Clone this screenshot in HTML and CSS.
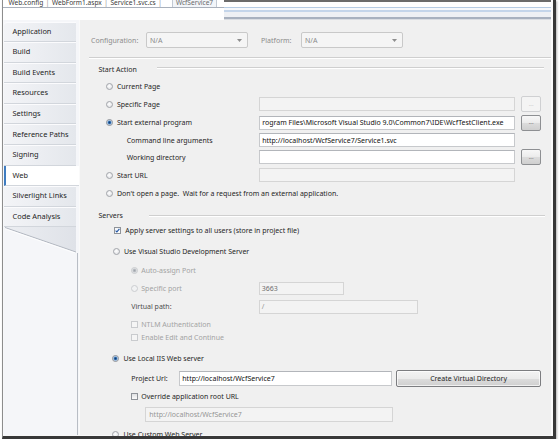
FILE: index.html
```html
<!DOCTYPE html>
<html lang="en">
<head>
<meta charset="utf-8">
<title>WcfService7 - Web</title>
<link rel="stylesheet" href="styles.css">
</head>
<body>
<div class="window">
  <div class="frame">
    <header class="doc-tabs">
      <div class="doc-tabs-left">
        <div class="tab-row">
          <span class="tab">Web.config</span><span class="tab-sep">|</span>
          <span class="tab">WebForm1.aspx</span><span class="tab-sep">|</span>
          <span class="tab">Service1.svc.cs</span><span class="tab-sep">|</span>
          <span class="tab tab-active">WcfService7</span>
        </div>
        <div class="tab-underline"></div>
      </div>
      <div class="doc-tabs-right">
        <div class="band band-top"></div>
        <div class="band band-gap"></div>
        <div class="band band-blue"></div>
        <div class="band band-gap2"></div>
        <div class="band band-blue2"></div>
        <div class="band band-mist"></div>
        <div class="band band-steel"></div>
        <div class="band band-base"></div>
      </div>
    </header>

    <div class="designer">
      <nav class="pages">
        <div class="page first">Application</div>
        <div class="page">Build</div>
        <div class="page">Build Events</div>
        <div class="page">Resources</div>
        <div class="page">Settings</div>
        <div class="page">Reference Paths</div>
        <div class="page">Signing</div>
        <div class="page active">Web</div>
        <div class="page">Silverlight Links</div>
        <div class="page">Code Analysis</div>
        <svg class="pages-tail" width="74" height="26" viewBox="0 0 74 26">
          <defs>
            <linearGradient id="tailFill" x1="0" y1="0" x2="1" y2="0">
              <stop offset="0" stop-color="#eceef2"/>
              <stop offset="1" stop-color="#dfe2e8"/>
            </linearGradient>
          </defs>
          <polygon points="0,0 72,0 72,25" fill="url(#tailFill)"/>
          <line x1="1" y1="0.5" x2="72" y2="25" stroke="#b3b8c1" stroke-width="1"/>
          <line x1="1" y1="1.8" x2="71" y2="26" stroke="#ffffff" stroke-width="0.8"/>
        </svg>
        <div class="pages-fill"></div>
      </nav>

      <main class="pane">
        <div class="config-row">
          <span class="cfg-label cfg-conf">Configuration:</span>
          <span class="select"><span class="select-text">N/A</span><svg class="select-arrow" width="5" height="3" viewBox="0 0 5 3"><polygon points="0,0 5,0 2.5,3" fill="#8e8e8e"/></svg></span>
          <span class="cfg-label cfg-plat">Platform:</span>
          <span class="select"><span class="select-text">N/A</span><svg class="select-arrow" width="5" height="3" viewBox="0 0 5 3"><polygon points="0,0 5,0 2.5,3" fill="#8e8e8e"/></svg></span>
        </div>
        <div class="etched top-rule"></div>

        <div class="group-head start-head">
          <span class="group-title start-title">Start Action</span>
          <span class="etched group-rule start-rule"></span>
        </div>

        <div class="start-rows">
          <div class="row r1">
            <span class="choice"><span class="radio"></span><span class="label">Current Page</span></span>
          </div>
          <div class="row r2">
            <span class="choice"><span class="radio"></span><span class="label">Specific Page</span></span>
            <span class="field off wide"></span>
            <span class="browse off">...</span>
          </div>
          <div class="row r3">
            <span class="choice"><span class="radio on"></span><span class="label">Start external program</span></span>
            <span class="field wide"><span class="field-text">rogram Files\Microsoft Visual Studio 9.0\Common7\IDE\WcfTestClient.exe</span></span>
            <span class="browse">...</span>
          </div>
          <div class="row r4">
            <span class="choice sub"><span class="label">Command line arguments</span></span>
            <span class="field wide"><span class="field-text">http://localhost/WcfService7/Service1.svc</span></span>
          </div>
          <div class="row r5">
            <span class="choice sub"><span class="label">Working directory</span></span>
            <span class="field wide"></span>
            <span class="browse">...</span>
          </div>
          <div class="row r6">
            <span class="choice"><span class="radio"></span><span class="label">Start URL</span></span>
            <span class="field off wide"></span>
          </div>
          <div class="row r7">
            <span class="choice"><span class="radio"></span><span class="label">Don't open a page.&nbsp; Wait for a request from an external application.</span></span>
          </div>
        </div>

        <div class="group-head servers-head">
          <span class="group-title servers-title">Servers</span>
          <span class="etched group-rule servers-rule"></span>
        </div>

        <div class="server-rows">
          <div class="row s-apply">
            <span class="check on"><svg width="5" height="5" viewBox="0 0 5 5"><path d="M0.6 2.6 L1.9 3.9 L4.4 0.9" fill="none" stroke="#2156a5" stroke-width="1.1"/></svg></span>
            <span class="label">Apply server settings to all users (store in project file)</span>
          </div>
          <div class="row s-vs">
            <span class="radio"></span><span class="label">Use Visual Studio Development Server</span>
          </div>
          <div class="row s-auto">
            <span class="radio dim-on"></span><span class="label dim">Auto-assign Port</span>
          </div>
          <div class="row s-port">
            <span class="port-choice"><span class="radio dim-off"></span><span class="label dim">Specific port</span></span>
            <span class="field off port-field"><span class="field-text grey">3663</span></span>
          </div>
          <div class="row s-vpath">
            <span class="label vpath-label">Virtual path:</span>
            <span class="field off vpath-field"><span class="field-text light">/</span></span>
          </div>
          <div class="row s-ntlm">
            <span class="check dim-box"></span><span class="label dim">NTLM Authentication</span>
          </div>
          <div class="row s-edit">
            <span class="check dim-box"></span><span class="label dim">Enable Edit and Continue</span>
          </div>
          <div class="row s-iis">
            <span class="radio on"></span><span class="label">Use Local IIS Web server</span>
          </div>
          <div class="row s-url">
            <span class="label url-label">Project Url:</span>
            <span class="field url-field"><span class="field-text">http://localhost/WcfService7</span></span>
            <span class="push-button">Create Virtual Directory</span>
          </div>
          <div class="row s-override">
            <span class="check"></span><span class="label">Override application root URL</span>
          </div>
          <div class="row s-root">
            <span class="field off root-field"><span class="field-text light">http://localhost/WcfService7</span></span>
          </div>
          <div class="row s-custom">
            <span class="radio"></span><span class="label">Use Custom Web Server</span>
          </div>
        </div>
      </main>
    </div>
  </div>
</div>
</body>
</html>
```

FILE: styles.css
```css
* { box-sizing: border-box; }

html, body {
  margin: 0;
  background: #ffffff;
}

body {
  font-family: "Noto Sans", "Open Sans", "DejaVu Sans", sans-serif;
  font-size: 7px;
  line-height: 1;
  color: #1f1f1f;
}

/* window chrome */
.window {
  margin-left: 2px;
  width: 554px;
  height: 439px;
  border-left: 1px solid #8d8d8d;
  border-right: 3px solid #383838;
  border-bottom: 3px solid #383838;
  box-shadow: 1px 1px 2px rgba(0, 0, 0, 0.3);
  overflow: hidden;
}

.frame {
  height: 100%;
  display: flex;
  flex-direction: column;
  border-right: 2px solid #fbfbfb;
  border-bottom: 1px solid #f7f7f7;
  background: #f7f8fa;
}

/* document tab strip */
.doc-tabs {
  height: 20px;
  flex-shrink: 0;
  display: flex;
  background: #ffffff;
}

.doc-tabs-left {
  width: 221px;
  display: flex;
  flex-direction: column;
}

.tab-row {
  height: 7px;
  overflow: hidden;
  display: flex;
  align-items: flex-start;
  padding-left: 4px;
  white-space: nowrap;
  color: #3a3a3a;
  font-size: 6.6px;
}

.tab, .tab-sep {
  margin-top: -1.5px;
  line-height: 8px;
}

.tab { padding: 0 1.5px; }
.tab-sep { color: #8a8a8a; padding: 0 1px; }

.tab-active {
  margin-left: 9px;
  padding: 0 3px;
  color: #6a6a6a;
  background: #f2f5f9;
  border-left: 1px solid #c3cad4;
  border-right: 1px solid #c3cad4;
}

.tab-underline {
  height: 1px;
  background: #a9b0bb;
}

.doc-tabs-right {
  flex: 1;
  display: flex;
  flex-direction: column;
}

.band { flex-shrink: 0; }
.band-top { height: 2px; background: #6b6b6b; }
.band-gap { height: 5px; background: #ffffff; }
.band-blue { height: 1px; background: #b6cce4; }
.band-gap2 { height: 2px; background: #f7f9fc; }
.band-blue2 { height: 2px; background: #c4d5ea; }
.band-mist { height: 5px; background: #eef0f4; }
.band-steel { height: 2px; background: #a8b1bf; }
.band-base { height: 1px; background: #dadde2; }

/* page list on the left */
.designer {
  flex: 1;
  display: flex;
  min-height: 0;
}

.pages {
  width: 75px;
  margin-left: 1px;
  padding-top: 1.5px;
  display: flex;
  flex-direction: column;
  background: #f5f6f9;
}

.page {
  height: 20.6px;
  flex-shrink: 0;
  display: flex;
  align-items: center;
  padding-left: 8.5px;
  margin-right: 3px;
  font-size: 7.4px;
  white-space: nowrap;
  background: linear-gradient(to right, #f3f4f7, #e4e7ec);
  border-bottom: 1px solid #d2d6dc;
  box-shadow: inset 0 1px 0 #fbfbfd;
  color: #1e1e1e;
}

.page.first {
  border-top-left-radius: 3px;
}

.page.active {
  margin-right: 0;
  background: #ffffff;
  border-left: 2px solid #3f7cc0;
  padding-left: 6.5px;
  box-shadow: none;
}

.pages-tail {
  display: block;
  flex-shrink: 0;
}

.pages-fill {
  flex: 1;
  margin-right: 1px;
  border-right: 1px solid #b8bdc5;
}

/* property pane */
.pane {
  flex: 1;
  display: flex;
  flex-direction: column;
  background: #f0f0f0;
  border-left: 1px solid #fafafa;
  padding-top: 12px;
}

.config-row {
  height: 16px;
  flex-shrink: 0;
  display: flex;
  align-items: center;
}

.cfg-label { color: #8c8c8c; }
.cfg-conf { margin-left: 11px; width: 55px; }
.cfg-plat { margin-left: 13px; width: 40px; }

.select {
  width: 102px;
  height: 16px;
  display: flex;
  align-items: center;
  justify-content: space-between;
  padding: 0 5px 0 3px;
  border: 1px solid #c9c9c9;
  border-radius: 2px;
  background: #f5f5f5;
}

.select-text { color: #8a8a8a; }
.select-arrow { display: block; }

.etched {
  height: 2px;
  border-top: 1px solid #cfcfcf;
  border-bottom: 1px solid #ffffff;
}

.top-rule {
  flex-shrink: 0;
  margin-top: 8.5px;
  margin-left: 9px;
}

.group-head {
  height: 12px;
  flex-shrink: 0;
  display: flex;
  align-items: center;
}

.group-title {
  margin-left: 18.5px;
  color: #262626;
}

.group-rule {
  align-self: flex-start;
}

.start-head { margin-top: 4.5px; }
.start-title { width: 58px; }
.start-rule { width: 387px; margin-top: 3.5px; }

.servers-head { margin-top: 10.7px; }
.servers-title { width: 50px; }
.servers-rule { width: 396px; margin-top: 5px; }

/* rows */
.row {
  height: 12px;
  flex-shrink: 0;
  display: flex;
  align-items: center;
  white-space: nowrap;
}

.label { color: #1f1f1f; }
.label.dim { color: #a3a3a3; }

.start-rows {
  display: flex;
  flex-direction: column;
  margin-left: 25.7px;
}

.start-rows .r1 { margin-top: 5.7px; }
.start-rows .r2 { margin-top: 5.6px; }
.start-rows .r3 { margin-top: 6.4px; }
.start-rows .r4 { margin-top: 5.6px; }
.start-rows .r5 { margin-top: 5px; }
.start-rows .r6 { margin-top: 6px; }
.start-rows .r7 { margin-top: 6px; }

.choice {
  width: 153.5px;
  flex-shrink: 0;
  display: flex;
  align-items: center;
}

.choice .radio { margin-right: 4.2px; }
.choice.sub { padding-left: 21px; }
.r7 .choice { width: auto; }

.radio {
  width: 7px;
  height: 7px;
  flex-shrink: 0;
  border-radius: 50%;
  border: 1px solid #a2a5aa;
  background: radial-gradient(circle at 45% 40%, #ffffff 0, #e4e5e8 3px);
}

.radio.on {
  border-color: #8d9197;
  background: radial-gradient(circle, #153c68 0, #2b67ab 1.2px, #a8c7e8 2.1px, #eef0f3 2.6px);
}

.radio.dim-on {
  border-color: #cacccf;
  background: radial-gradient(circle, #9ea3a9 0, #b8bcc1 1.3px, #e8e9eb 2.4px);
}

.radio.dim-off {
  border-color: #cbcdd0;
  background: #f1f2f3;
}

.check {
  width: 7px;
  height: 7px;
  flex-shrink: 0;
  display: flex;
  align-items: center;
  justify-content: center;
  border: 1px solid #8f9399;
  background: linear-gradient(#e0e1e3, #fbfbfb);
}

.check svg { display: block; }

.check.on { background: linear-gradient(#f2f4f7, #ffffff); }

.check.dim-box {
  border-color: #c9cbce;
  background: #f5f5f5;
}

.field {
  height: 14px;
  flex-shrink: 0;
  display: flex;
  align-items: center;
  overflow: hidden;
  padding-left: 2px;
  background: #ffffff;
  border: 1px solid #c7c9cc;
  border-top-color: #b2b5ba;
}

.field.off {
  background: #f3f3f3;
  border-color: #d5d5d5;
}

.field.wide { width: 255.6px; }

.field-text { color: #111111; white-space: nowrap; }
.field-text.grey { color: #6d6d6d; }
.field-text.light { color: #959595; }

.browse {
  width: 20.7px;
  height: 16px;
  flex-shrink: 0;
  margin-left: 6px;
  display: flex;
  align-items: center;
  justify-content: center;
  padding-bottom: 1px;
  font-size: 6px;
  color: #5a5a5a;
  border: 1px solid #8d8f92;
  border-radius: 2px;
  background: linear-gradient(#f7f7f7 0, #ebebeb 50%, #dcdcdc 51%, #cfcfcf 100%);
}

.browse.off {
  color: #c0c0c0;
  border-color: #cfd0d2;
  background: #f4f4f4;
}

/* server rows */
.server-rows {
  display: flex;
  flex-direction: column;
}

.s-apply { margin-top: 2.7px; padding-left: 34px; }
.s-vs { margin-top: 9px; padding-left: 32.5px; }
.s-auto { margin-top: 7px; padding-left: 51.2px; }
.s-port { margin-top: 6px; padding-left: 51.2px; }
.s-vpath { margin-top: 6px; padding-left: 51.3px; }
.s-ntlm { margin-top: 6.3px; padding-left: 51.3px; }
.s-edit { margin-top: 0.3px; padding-left: 51.3px; }
.s-iis { margin-top: 9.4px; padding-left: 32px; }
.s-url { margin-top: 8px; padding-left: 51.3px; }
.s-override { margin-top: 5.6px; padding-left: 50.8px; }
.s-root { margin-top: 6.5px; padding-left: 65.3px; }
.s-custom { margin-top: 8.2px; padding-left: 32px; }

.s-apply .check { margin-right: 4.3px; }
.s-vs .radio, .s-iis .radio, .s-custom .radio { margin-right: 4.4px; }
.s-auto .radio { margin-right: 3.1px; }
.s-ntlm .check, .s-edit .check { margin-right: 3px; }
.s-override .check { margin-right: 3.5px; }

.port-choice {
  width: 127.5px;
  flex-shrink: 0;
  display: flex;
  align-items: center;
}

.port-choice .radio { margin-right: 3.1px; }

.port-field { width: 85.6px; height: 13.3px; }

.vpath-label { width: 127.4px; flex-shrink: 0; color: #4e4e4e; }
.vpath-field { width: 159px; }

.url-label { width: 48px; flex-shrink: 0; }
.url-field { width: 212.7px; height: 14.3px; }

.push-button {
  width: 144.7px;
  height: 17px;
  flex-shrink: 0;
  margin-left: 4.3px;
  display: flex;
  align-items: center;
  justify-content: center;
  color: #1f1f1f;
  border: 1px solid #7c7d80;
  border-radius: 2px;
  background: linear-gradient(#f3f3f3 0, #ebebeb 50%, #dddddd 51%, #cfcfcf 100%);
  box-shadow: inset 0 0 0 1px rgba(255, 255, 255, 0.7);
}

.root-field { width: 247.4px; height: 15px; padding-left: 3px; }
```
